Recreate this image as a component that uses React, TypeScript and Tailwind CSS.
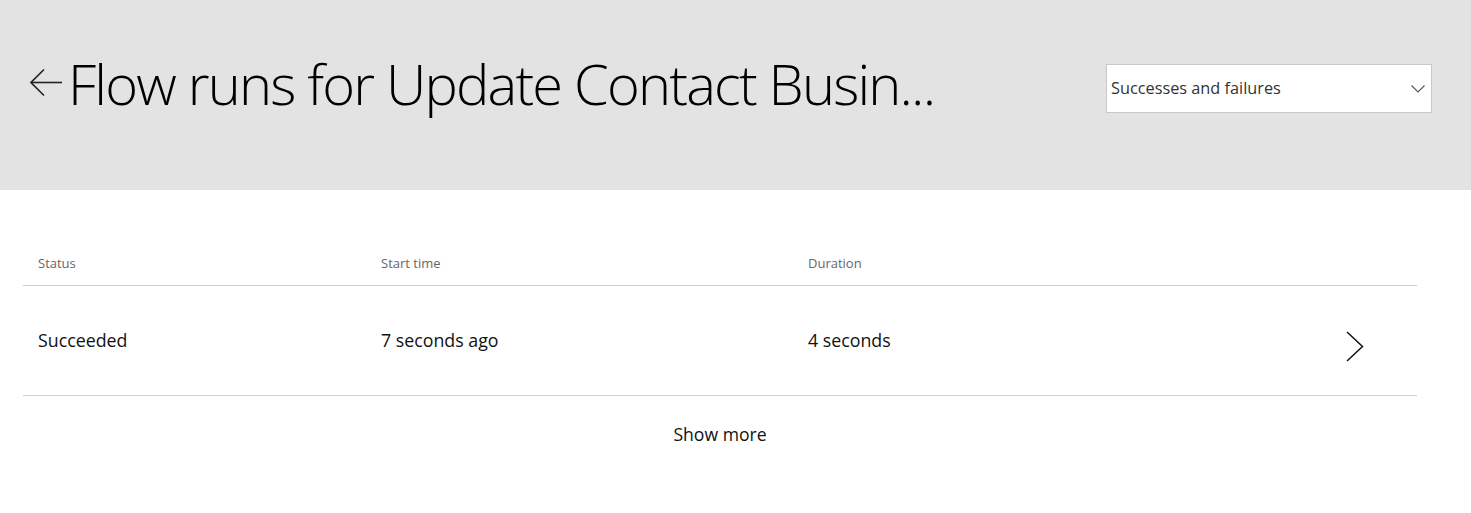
const font = { fontFamily: '"Open Sans", "Noto Sans", sans-serif' };

export default function App() {
  return (
    <div className="min-h-[513px] bg-white text-black" style={font}>
      <header className="h-[190px] bg-[#e3e3e3] flex items-start justify-between pl-[30px] pr-[39px]">
        <div className="flex items-center mt-[47px]">
          <button type="button" aria-label="Back" className="w-[38px] h-[40px] flex items-center">
            <svg width="34" height="30" viewBox="0 0 34 30" fill="none" stroke="#222" strokeWidth="1.6">
              <path d="M1 14.5 H32" />
              <path d="M14 1.5 L1 14.5 L14 27.5" />
            </svg>
          </button>
          <h1 className="text-[56px] font-light leading-[72px] tracking-[-1.8px] whitespace-nowrap">
            Flow runs for Update Contact Busin...
          </h1>
        </div>
        <div className="mt-[64px] w-[326px] h-[49px] bg-white border border-[#c8c8c8] flex items-center justify-between pl-[4px] pr-[6px]">
          <span className="text-[16.3px] text-[#333]">Successes and failures</span>
          <svg width="14" height="8" viewBox="0 0 14 8" fill="none" stroke="#555" strokeWidth="1.1">
            <path d="M0.5 0.5 L7 7 L13.5 0.5" />
          </svg>
        </div>
      </header>

      <section className="ml-[23px] w-[1394px] pt-[53px]">
        <div className="grid grid-cols-[343px_427px_1fr_80px] items-center h-[43px] border-b border-[#cfcfcf] pl-[15px] text-[13px] text-[#666]">
          <span>Status</span>
          <span>Start time</span>
          <span>Duration</span>
          <span />
        </div>
        <div className="grid grid-cols-[343px_427px_1fr_80px] items-center h-[110px] border-b border-[#cfcfcf] pl-[15px] text-[17.8px] text-[#111]">
          <span>Succeeded</span>
          <span>7 seconds ago</span>
          <span>4 seconds</span>
          <span className="flex items-center pl-[9px] pt-[12px]">
            <svg width="18" height="31" viewBox="0 0 18 31" fill="none" stroke="#111" strokeWidth="1.5">
              <path d="M1 1 L16.5 15.5 L1 30" />
            </svg>
          </span>
        </div>
        <div className="flex justify-center pt-[25px]">
          <button type="button" className="text-[17.6px] text-[#111]">
            Show more
          </button>
        </div>
      </section>
    </div>
  );
}
